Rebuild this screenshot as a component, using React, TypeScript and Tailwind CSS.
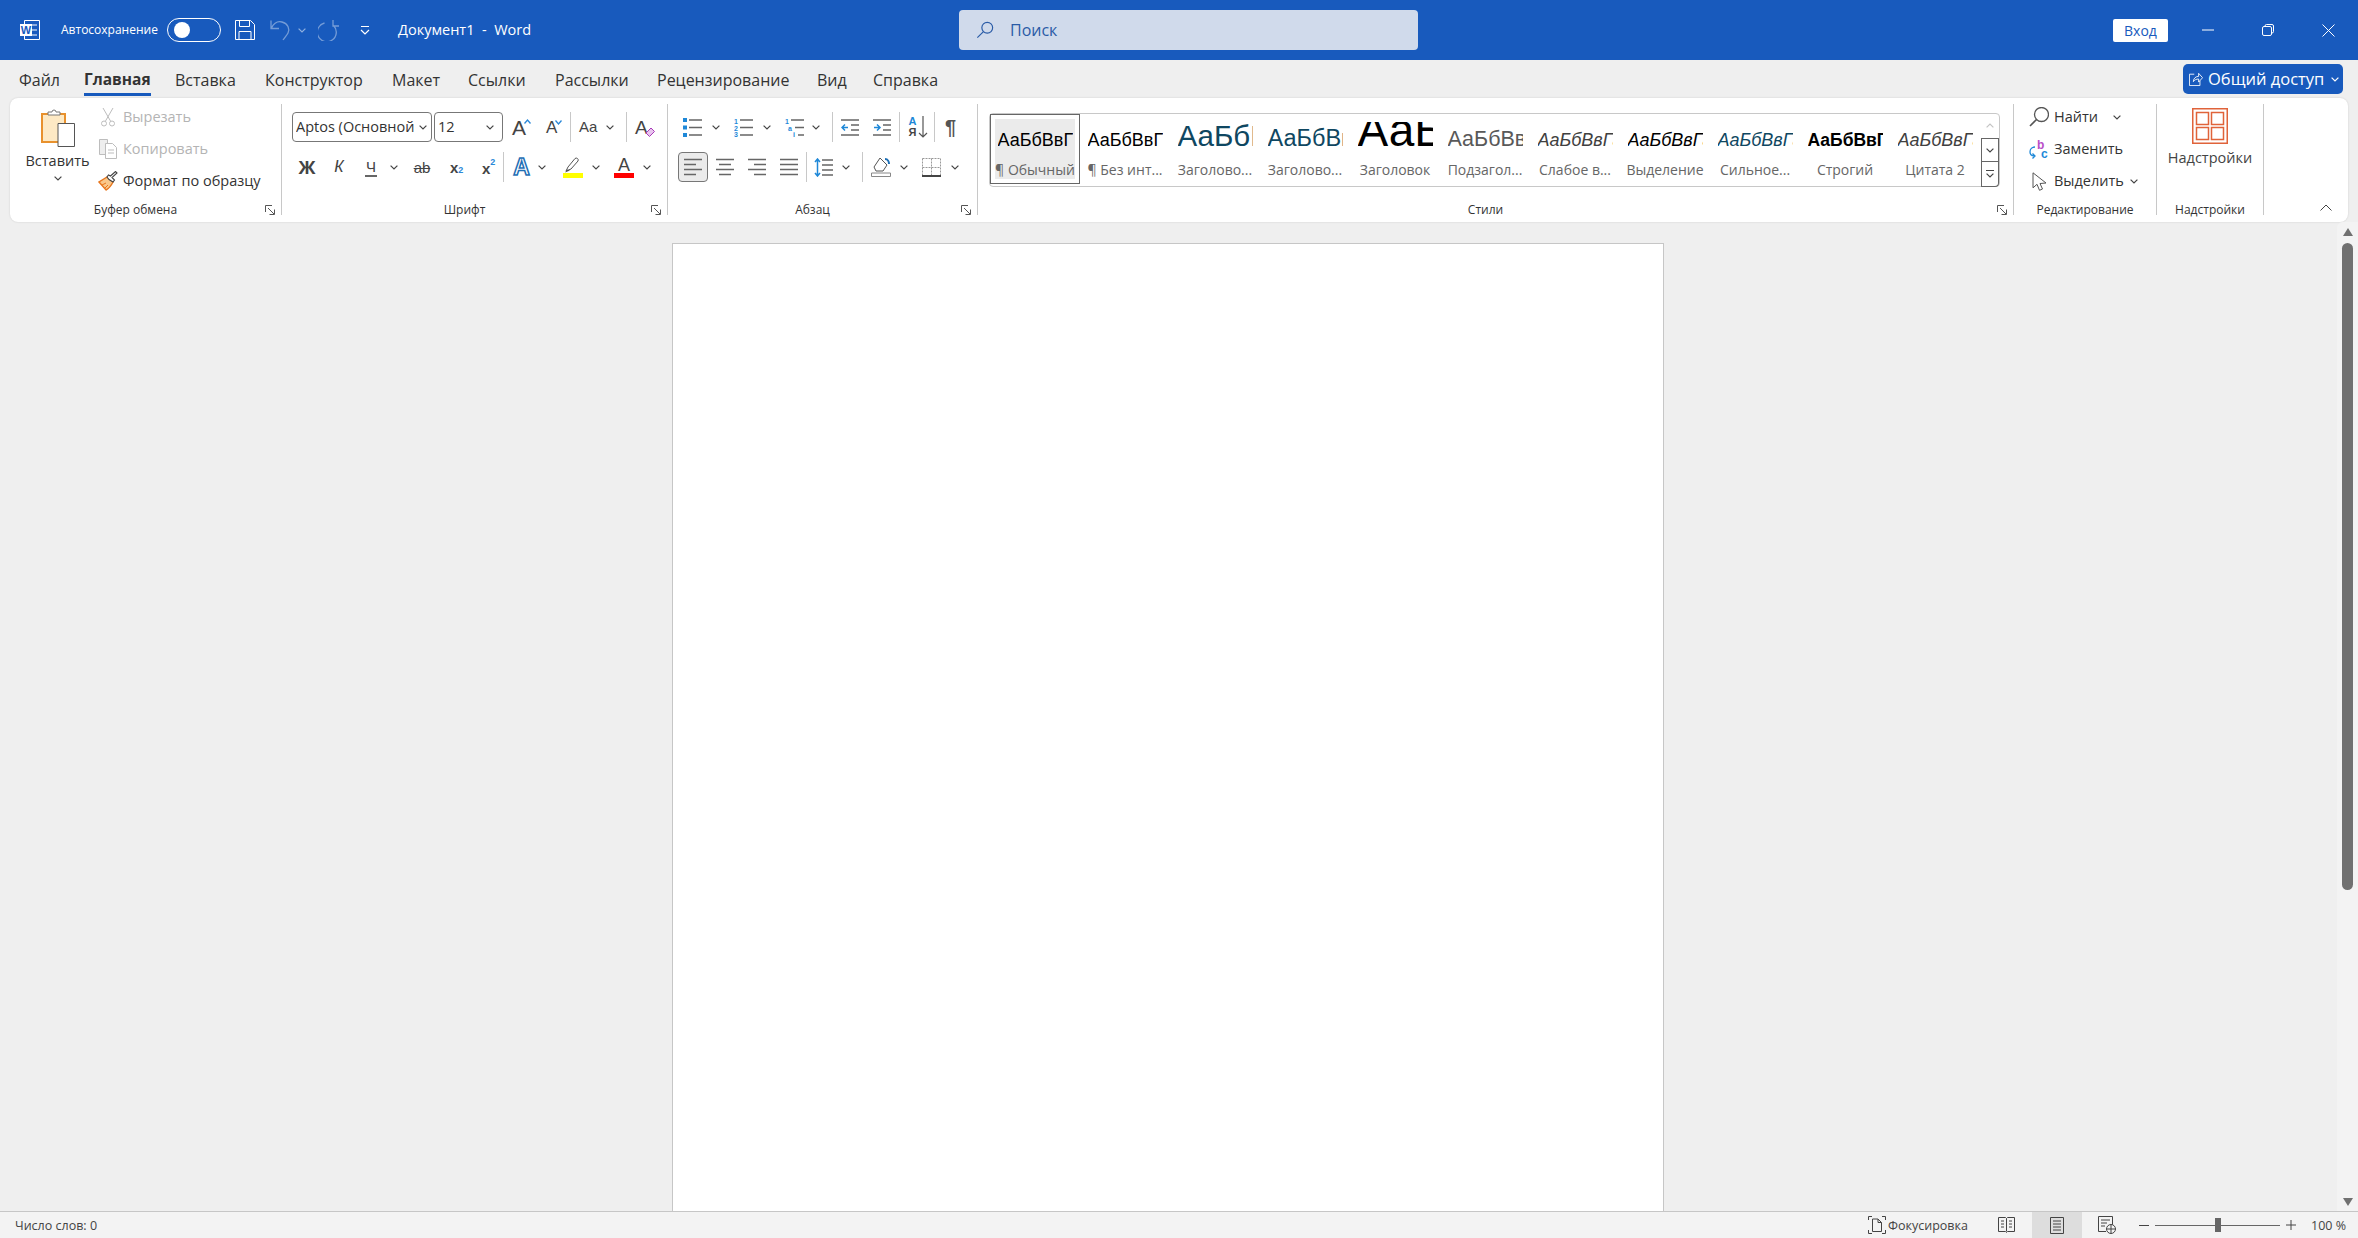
import React from "react";

const Chev = ({ className = "", color = "#444" }: { className?: string; color?: string }) => (
  <svg viewBox="0 0 8 5" className={`w-[8px] h-[5px] shrink-0 ${className}`}>
    <path d="M.6.6 4 4 7.4.6" fill="none" stroke={color} strokeWidth="1.2" />
  </svg>
);

const Sep = ({ className = "" }: { className?: string }) => (
  <div className={`w-px h-[30px] bg-[#c8c8c8] shrink-0 ${className}`} />
);

const Launcher = () => (
  <svg viewBox="0 0 10 10" className="w-[10px] h-[10px] shrink-0">
    <path d="M.5 7V.5H7M3 3l6 6M9.5 4.500v5h-5" fill="none" stroke="#555" strokeWidth="1" />
  </svg>
);

const Lines = ({ kind }: { kind: "left" | "center" | "right" | "justify" }) => {
  const rows = {
    left: ["M0 1.5h18", "M0 6.5h12", "M0 11.5h18", "M0 16.5h12"],
    center: ["M0 1.5h18", "M3 6.5h12", "M0 11.5h18", "M3 16.5h12"],
    right: ["M0 1.5h18", "M6 6.5h12", "M0 11.5h18", "M6 16.5h12"],
    justify: ["M0 1.5h18", "M0 6.5h18", "M0 11.5h18", "M0 16.5h18"],
  }[kind];
  return (
    <svg viewBox="0 0 18 18" className="w-[18px] h-[18px] shrink-0">
      <path d={rows.join("")} stroke="#666" strokeWidth="1.6" fill="none" />
    </svg>
  );
};

function WordIcon() {
  return (
    <svg viewBox="0 0 20 20" className="w-[20px] h-[20px] shrink-0">
      <path d="M4.5.5h15v19h-15z" fill="none" stroke="#fff" />
      <path d="M10 5h7M10 10h7M10 15h7" stroke="#fff" />
      <rect x="0" y="4" width="12" height="12" fill="#fff" />
      <text x="6" y="14" textAnchor="middle" fontSize="11" fontWeight="700" fill="#185abd" fontFamily="Liberation Sans">W</text>
    </svg>
  );
}

function TitleBar() {
  return (
    <div className="h-[60px] shrink-0 bg-[#185abd] flex items-center text-white">
      <div className="ml-[20px]"><WordIcon /></div>
      <span className="ml-[21px] w-[106px] text-[12px] whitespace-nowrap">Автосохранение</span>
      <div className="w-[54px] h-[24px] rounded-full border border-white flex items-center pl-[6px]">
        <div className="w-[16px] h-[16px] rounded-full bg-white" />
      </div>
      <svg viewBox="0 0 20 20" className="ml-[14px] w-[20px] h-[20px]">
        <path d="M.5.5h15l4 4v15H.5zM4.5.5v6h10v-6M4 19.5v-8h12v8" fill="none" stroke="#fff" />
      </svg>
      <svg viewBox="0 0 22 22" className="ml-[15px] w-[22px] h-[22px] opacity-40">
        <path d="M1 1.500v8h8M1.500 9C4 4 8 2 12 3c6 1.500 8 7 6 11-1 2-3 4-5 7" fill="none" stroke="#fff" strokeWidth="1.300" />
      </svg>
      <Chev className="ml-[6px]" color="#8fb0e0" />
      <svg viewBox="0 0 22 22" className="ml-[12px] w-[22px] h-[22px] opacity-40">
        <path d="M15 1v6h6M15.500 6.500a9.500 9.500 0 1 1-9-2.500" fill="none" stroke="#fff" strokeWidth="1.300" />
      </svg>
      <svg viewBox="0 0 10 10" className="ml-[20px] w-[10px] h-[10px]">
        <path d="M1 1.500h8M1 5l4 4 4-4" fill="none" stroke="#fff" strokeWidth="1.200" />
      </svg>
      <span className="ml-[28px] w-[561px] text-[14.500px] whitespace-pre">Документ1  -  Word</span>
      <div className="w-[459px] h-[40px] rounded-[4px] bg-[#d0daeb] flex items-center pl-[17px] text-[#2a5ba6]">
        <svg viewBox="0 0 20 20" className="w-[18px] h-[18px]">
          <circle cx="12.500" cy="7.500" r="6" fill="none" stroke="#2a5ba6" strokeWidth="1.300" />
          <path d="M8 12 1.500 18.500" stroke="#2a5ba6" strokeWidth="1.300" />
        </svg>
        <span className="ml-[16px] text-[16px]">Поиск</span>
      </div>
      <div className="ml-[695px] w-[55px] h-[23px] bg-white rounded-[2px] flex items-center justify-center text-[#185abd] text-[14px]">
        Вход
      </div>
      <svg viewBox="0 0 12 12" className="ml-[34px] w-[12px] h-[12px]"><path d="M0 6h12" stroke="#fff" /></svg>
      <svg viewBox="0 0 12 12" className="ml-[48px] w-[12px] h-[12px]">
        <path d="M3 2.500V2a1.500 1.500 0 0 1 1.500-1.500H10A1.500 1.500 0 0 1 11.500 2v5.500A1.500 1.500 0 0 1 10 9h-.5" fill="none" stroke="#fff" />
        <rect x=".5" y="2.500" width="9" height="9" rx="1.500" fill="none" stroke="#fff" />
      </svg>
      <svg viewBox="0 0 13 13" className="ml-[48px] w-[13px] h-[13px]"><path d="M.5.500l12 12M12.500.500l-12 12" stroke="#fff" /></svg>
    </div>
  );
}

const tabs = [
  { label: "Файл", w: "w-[65px] text-[16px]" },
  { label: "Главная", w: "w-[67px] mr-[24px] text-[15.500px] font-bold text-[#222] border-[#185abd]" },
  { label: "Вставка", w: "w-[90px] text-[16px]" },
  { label: "Конструктор", w: "w-[127px] text-[16px]" },
  { label: "Макет", w: "w-[76px] text-[16px]" },
  { label: "Ссылки", w: "w-[87px] text-[16px]" },
  { label: "Рассылки", w: "w-[102px] text-[16px]" },
  { label: "Рецензирование", w: "w-[160px] text-[16px]" },
  { label: "Вид", w: "w-[56px] text-[16px]" },
  { label: "Справка", w: "w-[80px] text-[16px]" },
];

function TabRow() {
  return (
    <div className="h-[38px] shrink-0 flex items-start pl-[19px]">
      {tabs.map((t) => (
        <span key={t.label} className={`h-[36px] pt-[7px] border-b-[3px] flex items-center text-[#333] whitespace-nowrap ${t.label === "Главная" ? "" : "border-transparent"} ${t.w}`}>
          {t.label}
        </span>
      ))}
      <div className="ml-auto mr-[15px] mt-[4px] w-[160px] h-[30px] rounded-[5px] bg-[#185abd] text-white flex items-center pl-[6px]">
        <svg viewBox="0 0 16 16" className="w-[14px] h-[14px] shrink-0">
          <path d="M6 2.500H.5v13h12V10M5 11C5 7 8 5 11 5V1.500l4.500 5-4.500 5V8c-2.500 0-5 1-6 3z" fill="none" stroke="#fff" />
        </svg>
        <span className="ml-[5px] w-[123px] text-[16.500px] whitespace-nowrap">Общий доступ</span>
        <Chev className="" color="#fff" />
      </div>
    </div>
  );
}

function Group({ width, label, launcher = true, children }: { width: string; label: string; launcher?: boolean; children: React.ReactNode }) {
  return (
    <div className={`mt-[6px] h-[111px] shrink-0 flex flex-col border-r border-[#c8c8c8] ${width}`}>
      <div className="h-[100px] shrink-0">{children}</div>
      <div className="flex items-center h-[11px]">
        <span className="flex-1 text-center text-[12px] leading-none text-[#333] whitespace-nowrap">{label}</span>
        {launcher && <div className="w-[20px] flex justify-start pl-[4px]"><Launcher /></div>}
      </div>
    </div>
  );
}

function SmallRow({ icon, text, dim, children }: { icon: React.ReactNode; text: string; dim?: boolean; children?: React.ReactNode }) {
  return (
    <div className="h-[24px] flex items-center">
      <div className="w-[20px] h-[20px] flex items-center justify-center shrink-0">{icon}</div>
      <span className={`ml-[5px] text-[14.500px] whitespace-nowrap ${dim ? "text-[#b4b4b4]" : "text-[#333]"}`}>{text}</span>
      {children}
    </div>
  );
}

function Clipboard() {
  return (
    <div className="mt-[4px] w-[85px] flex flex-col items-center">
      <svg viewBox="0 0 34 39" className="w-[34px] h-[39px]">
        <path d="M1 6h23v28H1z" fill="#fde9c4" stroke="#e8912d" strokeWidth="2" />
        <path d="M7 7V4h4a2 2 0 0 1 4 0h4v3z" fill="#fff" stroke="#777" />
        <path d="M17 15.500h16.500v23H17z" fill="#fff" stroke="#555" />
      </svg>
      <span className="mt-[5px] text-[14.500px] leading-[18px] text-[#333]">Вставить</span>
      <Chev className="mt-[6px]" />
    </div>
  );
}

function BufferGroup() {
  return (
    <Group width="w-[272px]" label="Буфер обмена">
      <div className="flex">
        <div className="ml-[5px]"><Clipboard /></div>
        <div className="pt-[1px] flex flex-col gap-[8px] -ml-[2px]">
          <SmallRow dim text="Вырезать" icon={
            <svg viewBox="0 0 14 20" className="w-[14px] h-[20px]">
              <path d="M2 1l7.500 13M12 1 4.500 14" stroke="#bdbdbd" fill="none" />
              <circle cx="3" cy="16.500" r="2.500" fill="none" stroke="#bdbdbd" />
              <circle cx="11" cy="16.500" r="2.500" fill="none" stroke="#bdbdbd" />
            </svg>
          } />
          <SmallRow dim text="Копировать" icon={
            <svg viewBox="0 0 18 20" className="w-[18px] h-[20px]">
              <path d="M.5.500h8v15h-8z" fill="#eee" stroke="#bdbdbd" />
              <path d="M6.500 4.500h7l4 4v11h-11zM9 11h6M9 14h6" fill="#fff" stroke="#bdbdbd" />
            </svg>
          } />
          <SmallRow text="Формат по образцу" icon={
            <svg viewBox="0 0 20 20" className="w-[20px] h-[20px]">
              <path d="M9 6 1 11l7 8c2-1 5-4 7-8z" fill="#f9c78a" stroke="#e8761d" strokeWidth="1.400" />
              <path d="M4 14l4-2M7 17l3-3" stroke="#e8761d" />
              <path d="M9 6 11 8.500 15 11 16.500 9 14 6.500 19 2 17.500.500 12.500 5 10.500 4z" fill="#fff" stroke="#444" strokeWidth="1.100" />
            </svg>
          } />
        </div>
      </div>
    </Group>
  );
}

function FontGroup() {
  return (
    <Group width="w-[386px]" label="Шрифт">
      <div className="pt-[8px] pl-[10px] flex items-center h-[38px]">
        <div className="w-[140px] h-[30px] border border-[#777] rounded-[4px] flex items-center pl-[3px] pr-[4px] text-[#333]">
          <span className="flex-1 text-[14.500px] whitespace-nowrap overflow-hidden">Aptos (Основной</span>
          <Chev />
        </div>
        <div className="ml-[2px] w-[69px] h-[30px] border border-[#777] rounded-[4px] flex items-center pl-[3px] pr-[8px] text-[#333]">
          <span className="flex-1 text-[14.500px]">12</span>
          <Chev />
        </div>
        <div className="ml-[9px] w-[21px] flex items-start">
          <span className="text-[21px] leading-none text-[#444] font-['Liberation_Sans',sans-serif]">A</span>
          <svg viewBox="0 0 7 5" className="w-[7px] h-[5px] -ml-[2px] mt-[2px]"><path d="M.5 4.500 3.500 1l3 3.500" fill="none" stroke="#2b88d8" strokeWidth="1.300" /></svg>
        </div>
        <div className="ml-[13px] w-[17px] flex items-start">
          <span className="text-[17px] leading-none text-[#444] font-['Liberation_Sans',sans-serif]">A</span>
          <svg viewBox="0 0 7 5" className="w-[7px] h-[5px] -ml-[2px] mt-[1px]"><path d="M.5.500l3 3.500 3-3.500" fill="none" stroke="#2b88d8" strokeWidth="1.300" /></svg>
        </div>
        <Sep className="ml-[7px]" />
        <span className="ml-[8px] w-[22px] text-[15px] text-[#444] whitespace-nowrap font-['Liberation_Sans',sans-serif]">Aa</span>
        <Chev className="ml-[5px]" />
        <Sep className="ml-[12px]" />
        <div className="ml-[8px] w-[20px] flex items-end">
          <span className="text-[19px] leading-none text-[#444] font-['Liberation_Sans',sans-serif]">A</span>
          <svg viewBox="0 0 10 10" className="w-[10px] h-[10px] -ml-[3px]"><path d="M1 6 6 1l3.500 3.500-5 5z" fill="#e8c5ee" stroke="#a83ab8" /></svg>
        </div>
      </div>
      <div className="mt-[10px] pl-[16px] flex items-center h-[30px] text-[#444]">
        <span className="w-[18px] text-center text-[18px] font-bold leading-none">Ж</span>
        <span className="ml-[17px] w-[12px] text-center text-[16px] italic leading-none font-['Liberation_Sans',sans-serif]">К</span>
        <span className="ml-[20px] w-[12px] text-center text-[15px] leading-[17px] border-b-2 border-[#666] font-['Liberation_Sans',sans-serif]">Ч</span>
        <Chev className="ml-[13px]" />
        <span className="ml-[14px] w-[20px] text-center text-[15px] leading-none line-through font-['Liberation_Sans',sans-serif]">ab</span>
        <span className="ml-[18px] w-[14px] flex items-end font-['Liberation_Sans',sans-serif]">
          <span className="text-[15px] font-bold leading-none">x</span>
          <span className="text-[9px] font-bold leading-none text-[#2b88d8]">2</span>
        </span>
        <span className="ml-[18px] w-[13px] flex items-start font-['Liberation_Sans',sans-serif]">
          <span className="text-[15px] font-bold leading-none mt-[3px]">x</span>
          <span className="text-[9px] font-bold leading-none text-[#2b88d8]">2</span>
        </span>
        <Sep className="ml-[8px]" />
        <span className="ml-[8px] w-[19px] text-center text-[23px] font-bold leading-none text-white [-webkit-text-stroke:1.500px_#1f6fb5] font-['Liberation_Sans',sans-serif]">A</span>
        <Chev className="ml-[7px]" />
        <div className="ml-[17px] w-[20px] flex flex-col items-center">
          <svg viewBox="0 0 20 16" className="w-[20px] h-[16px]">
            <path d="M3 14l2-4 7-8.500a2 2 0 0 1 3 2.500l-7 8z" fill="#fff" stroke="#555" />
            <path d="M2 15.500l2-3 3 1z" fill="#555" />
          </svg>
          <div className="w-[20px] h-[5px] bg-[#ffff00]" />
        </div>
        <Chev className="ml-[9px]" />
        <div className="ml-[14px] w-[20px] flex flex-col items-center">
          <span className="h-[16px] text-[18px] leading-[16px] font-['Liberation_Sans',sans-serif]">A</span>
          <div className="w-[20px] h-[5px] bg-[#ff0000]" />
        </div>
        <Chev className="ml-[9px]" />
      </div>
    </Group>
  );
}

function ListIcon({ marks }: { marks: "bullet" | "number" | "multi" }) {
  return (
    <svg viewBox="0 0 19 19" className="w-[19px] h-[19px] shrink-0">
      <path d={marks === "multi" ? "M6 2h13M10 9.500h9M13 17h6" : "M6 2h13M6 9.500h13M6 17h13"} stroke="#666" strokeWidth="1.300" />
      {marks === "bullet" && <path d="M0 0h4v4H0zM0 7.500h4v4H0zM0 15h4v4H0z" fill="#1e88d8" />}
      {marks !== "bullet" && (
        <g fill="#1e88d8" fontSize="7" fontWeight="700" fontFamily="Liberation Sans">
          <text x="0" y="6">1</text>
          <text x={marks === "multi" ? 3 : 0} y="12.500">{marks === "multi" ? "a" : "2"}</text>
          <text x={marks === "multi" ? 8 : 0} y="19">{marks === "multi" ? "i" : "3"}</text>
        </g>
      )}
    </svg>
  );
}

function ParagraphGroup() {
  return (
    <Group width="w-[310px]" label="Абзац">
      <div className="pt-[8px] pl-[15px] flex items-center h-[38px]">
        <ListIcon marks="bullet" />
        <Chev className="ml-[10px]" />
        <div className="ml-[14px]"><ListIcon marks="number" /></div>
        <Chev className="ml-[10px]" />
        <div className="ml-[14px]"><ListIcon marks="multi" /></div>
        <Chev className="ml-[8px]" />
        <Sep className="ml-[12px]" />
        <svg viewBox="0 0 18 18" className="ml-[8px] w-[18px] h-[18px]">
          <path d="M0 2h18M10 7h8M10 12h8M0 17h18" stroke="#666" strokeWidth="1.300" />
          <path d="M7 9.500H1M4 6.500l-3 3 3 3" fill="none" stroke="#1e88d8" strokeWidth="1.500" />
        </svg>
        <svg viewBox="0 0 18 18" className="ml-[14px] w-[18px] h-[18px]">
          <path d="M0 2h18M10 7h8M10 12h8M0 17h18" stroke="#666" strokeWidth="1.300" />
          <path d="M1 9.500h6M4 6.500l3 3-3 3" fill="none" stroke="#1e88d8" strokeWidth="1.500" />
        </svg>
        <Sep className="ml-[8px]" />
        <div className="ml-[7px] w-[21px] flex items-center font-['Liberation_Sans',sans-serif]">
          <div className="flex flex-col items-center w-[11px] text-[11px] font-bold leading-[11px]">
            <span className="text-[#1e88d8]">A</span>
            <span className="text-[#444]">Я</span>
          </div>
          <svg viewBox="0 0 10 22" className="w-[10px] h-[22px]">
            <path d="M5 0v21M1 17l4 4 4-4" fill="none" stroke="#555" strokeWidth="1.200" />
          </svg>
        </div>
        <Sep className="ml-[6px]" />
        <span className="ml-[10px] text-[20px] font-bold leading-none text-[#555] font-['Liberation_Sans',sans-serif]">¶</span>
      </div>
      <div className="mt-[10px] pl-[10px] flex items-center h-[30px]">
        <div className="w-[30px] h-[30px] rounded-[4px] border border-[#777] bg-[#ebebeb] flex items-center justify-center">
          <Lines kind="left" />
        </div>
        <div className="ml-[8px]"><Lines kind="center" /></div>
        <div className="ml-[14px]"><Lines kind="right" /></div>
        <div className="ml-[14px]"><Lines kind="justify" /></div>
        <Sep className="ml-[8px]" />
        <svg viewBox="0 0 19 19" className="ml-[7px] w-[19px] h-[19px]">
          <path d="M8 2h11M8 7h11M8 12h11M8 17h11" stroke="#666" strokeWidth="1.300" />
          <path d="M3.500 1v17M1 4l2.500-3L6 4M1 15l2.500 3L6 15" fill="none" stroke="#1e88d8" strokeWidth="1.500" />
        </svg>
        <Chev className="ml-[9px]" />
        <Sep className="ml-[12px]" />
        <svg viewBox="0 0 20 20" className="ml-[8px] w-[20px] h-[20px]">
          <path d="M3 10 9 1l7 7-4 6H5z" fill="#fff" stroke="#555" />
          <path d="M14 2c3 0 4 3 4 5" fill="none" stroke="#1e6fb5" strokeWidth="2" />
          <path d="M.500 16h19v3.500H.500z" fill="#fff" stroke="#888" />
        </svg>
        <Chev className="ml-[9px]" />
        <svg viewBox="0 0 19 19" className="ml-[14px] w-[19px] h-[19px]">
          <path d="M.5.500h18M.5.500v18M18.500.500v18M9.500.500v18M.5 9.500h18" fill="none" stroke="#999" strokeDasharray="2 1" />
          <path d="M0 18h19" stroke="#444" strokeWidth="2" />
        </svg>
        <Chev className="ml-[10px]" />
      </div>
    </Group>
  );
}

const styles = [
  { sample: "АаБбВвГгДд", label: "¶ Обычный", cls: "text-[18px] text-black" },
  { sample: "АаБбВвГгДд", label: "¶ Без инт...", cls: "text-[18px] text-black" },
  { sample: "АаБбВвГгДд", label: "Заголово...", cls: "text-[29.500px] text-[#0f4761]" },
  { sample: "АаБбВвГгДд", label: "Заголово...", cls: "text-[23.500px] text-[#0f4761]" },
  { sample: "АаБбВвГгДд", label: "Заголовок", cls: "text-[46px] text-black" },
  { sample: "АаБбВвГгДд", label: "Подзагол...", cls: "text-[21.500px] text-[#595959]" },
  { sample: "АаБбВвГгДд", label: "Слабое в...", cls: "text-[18px] italic text-[#404040]" },
  { sample: "АаБбВвГгДд", label: "Выделение", cls: "text-[18px] italic text-black" },
  { sample: "АаБбВвГгДд", label: "Сильное...", cls: "text-[18px] italic text-[#0f4761]" },
  { sample: "АаБбВвГгДд", label: "Строгий", cls: "text-[17.500px] font-bold text-black" },
  { sample: "АаБбВвГгДд", label: "Цитата 2", cls: "text-[18px] italic text-[#404040]" },
];

function StylesGroup() {
  return (
    <Group width="w-[1036px]" label="Стили">
      <div className="pl-[11px] pt-[9px]">
        <div className="w-[1011px] h-[74px] flex border border-[#c8c8c8] rounded-[4px] bg-white">
          {styles.map((s, i) => (
            <div key={i} className={`w-[90px] h-[70px] shrink-0 p-[4px] box-border ${i === 0 ? "border border-[#666]" : "border border-transparent"}`}>
              <div className={`h-full flex flex-col items-center ${i === 0 ? "bg-[#ebebeb]" : ""}`}>
                <div className="mt-[3px] w-[75px] h-[30px] shrink-0 overflow-hidden whitespace-nowrap text-[18px] leading-[36px] font-['Liberation_Sans',sans-serif]">
                  <span className={`leading-[0] ${s.cls}`}>{s.sample}</span>
                </div>
                <span className="mt-[9px] text-[14px] leading-[18px] text-[#666] whitespace-nowrap">{s.label}</span>
              </div>
            </div>
          ))}
          <div className="w-[18px] -my-px -mr-px ml-[1px] flex flex-col shrink-0">
            <div className="h-[25px] flex items-center justify-center">
              <svg viewBox="0 0 8 5" className="w-[8px] h-[5px]"><path d="M.6 4.400 4 1l3.400 3.400" fill="none" stroke="#c4c4c4" strokeWidth="1.200" /></svg>
            </div>
            <div className="h-[24px] border border-[#666] flex items-center justify-center"><Chev /></div>
            <div className="h-[25px] border border-t-0 border-[#666] rounded-br-[4px] flex flex-col items-center justify-center gap-[2px]">
              <div className="w-[8px] h-px bg-[#444]" />
              <Chev />
            </div>
          </div>
        </div>
      </div>
    </Group>
  );
}

function EditGroup() {
  return (
    <Group width="w-[143px]" label="Редактирование" launcher={false}>
      <div className="pl-[15px] pt-[1px] flex flex-col gap-[8px]">
        <SmallRow text="Найти" icon={
          <svg viewBox="0 0 20 20" className="w-[20px] h-[20px]">
            <circle cx="12.500" cy="7.500" r="7" fill="none" stroke="#555" strokeWidth="1.300" />
            <path d="M7.500 12.500 1 19" stroke="#555" strokeWidth="1.600" />
          </svg>
        }>
          <Chev className="ml-[15px]" />
        </SmallRow>
        <SmallRow text="Заменить" icon={
          <svg viewBox="0 0 20 20" className="w-[20px] h-[20px]">
            <path d="M6 8C3 8 1 10 1 13s2 4 5 4M3.500 14.500 6 17l-2.500 2.500" fill="none" stroke="#1e88d8" strokeWidth="1.300" />
            <text x="8" y="10" fontSize="12" fontWeight="700" fill="#b94ec9" fontFamily="Liberation Sans">b</text>
            <text x="12" y="19" fontSize="12" fontWeight="700" fill="#1e88d8" fontFamily="Liberation Sans">c</text>
          </svg>
        } />
        <SmallRow text="Выделить" icon={
          <svg viewBox="0 0 15 19" className="w-[15px] h-[19px]">
            <path d="M1 .8v15l4-3.500 2.500 6 3-1.300L8 11.500l6-.5z" fill="#fff" stroke="#555" />
          </svg>
        }>
          <Chev className="ml-[6px]" />
        </SmallRow>
      </div>
    </Group>
  );
}

function AddinsGroup() {
  return (
    <Group width="w-[107px]" label="Надстройки" launcher={false}>
      <div className="pt-[4px] flex flex-col items-center">
        <svg viewBox="0 0 36 36" className="w-[36px] h-[36px]">
          <path d="M.75.750h34.500v34.500H.75z" fill="none" stroke="#e0633a" strokeWidth="1.500" />
          <path d="M4.500 4.500h12v12h-12zM19.500 4.500h12v12h-12zM4.500 19.500h12v12h-12zM19.500 19.500h12v12h-12z" fill="none" stroke="#e0633a" strokeWidth="1.500" />
        </svg>
        <span className="mt-[5px] text-[14.500px] leading-[18px] text-[#444] whitespace-nowrap">Надстройки</span>
      </div>
    </Group>
  );
}

function Ribbon() {
  return (
    <div className="ml-[10px] w-[2338px] h-[124px] shrink-0 bg-white rounded-[8px] shadow-[0_0_2px_rgba(0,0,0,0.15)] flex">
      <BufferGroup />
      <FontGroup />
      <ParagraphGroup />
      <StylesGroup />
      <EditGroup />
      <AddinsGroup />
      <div className="flex-1 mt-[6px] h-[111px] flex items-end justify-end pr-[16px] pb-[4px]">
        <svg viewBox="0 0 12 7" className="w-[12px] h-[7px]"><path d="M.5 6.500 6 1l5.500 5.500" fill="none" stroke="#444" /></svg>
      </div>
    </div>
  );
}

function Scrollbar() {
  return (
    <div className="w-[21px] shrink-0 bg-[#f3f3f3] rounded-tl-[6px] flex flex-col items-center pt-[6px] pb-[5px]">
      <div className="w-0 h-0 border-x-[5.500px] border-x-transparent border-b-[8px] border-b-[#707070]" />
      <div className="mt-[7px] w-[11px] h-[647px] rounded-full bg-[#707070]" />
      <div className="mt-auto w-0 h-0 border-x-[5.500px] border-x-transparent border-t-[8px] border-t-[#707070]" />
    </div>
  );
}

function StatusBar() {
  return (
    <div className="h-[27px] shrink-0 box-border border-t border-[#c6c6c6] bg-[#f3f3f3] flex items-center text-[12.500px] text-[#444]">
      <span className="ml-[15px] pt-[2px]">Число слов: 0</span>
      <svg viewBox="0 0 18 18" className="ml-auto w-[18px] h-[18px]">
        <path d="M.5 4V.5H4M14 .5h3.500V4M.5 14v3.500H4M14 17.500h3.500V14" fill="none" stroke="#444" />
        <path d="M4.500 3h5.500l3.500 3.500v9h-9zM10 3v3.500h3.500" fill="none" stroke="#444" />
      </svg>
      <span className="ml-[2px] w-[110px] pt-[2px]">Фокусировка</span>
      <svg viewBox="0 0 17 16" className="w-[17px] h-[16px]">
        <path d="M.5.500h7l1 1 1-1h7v14h-7l-1 1-1-1h-7zM8.500 1.500v13M3 4h3M3 7h3M3 10h3M11 4h3M11 7h3M11 10h3" fill="none" stroke="#444" />
      </svg>
      <div className="ml-[17px] w-[50px] h-full bg-[#dddddd] flex items-center justify-center">
        <svg viewBox="0 0 14 17" className="w-[14px] h-[17px]">
          <path d="M.5.500h13v16H.5zM3 4h8M3 7h8M3 10h8M3 13h8" fill="none" stroke="#444" />
        </svg>
      </div>
      <svg viewBox="0 0 18 18" className="ml-[16px] w-[18px] h-[18px]">
        <path d="M.5.500h14V9M.5.500v15H8M3 4h9M3 7h6M3 10h4" fill="none" stroke="#444" />
        <circle cx="13" cy="13" r="4.500" fill="#f3f3f3" stroke="#444" />
        <path d="M8.500 13h9M13 8.500v9" stroke="#444" />
      </svg>
      <div className="ml-[23px] w-[10px] h-px bg-[#444]" />
      <div className="ml-[6px] w-[125px] h-px bg-[#666] flex items-center pl-[60px]">
        <div className="w-[6px] h-[14px] bg-[#666] shrink-0" />
      </div>
      <svg viewBox="0 0 10 10" className="ml-[6px] w-[10px] h-[10px]"><path d="M0 5h10M5 0v10" stroke="#444" /></svg>
      <span className="ml-[15px] w-[47px] pt-[2px] whitespace-nowrap">100 %</span>
    </div>
  );
}

export default function App() {
  return (
    <div className="w-[2358px] h-[1238px] overflow-hidden flex flex-col bg-[#efefef] font-['Open_Sans','Noto_Sans',sans-serif]">
      <TitleBar />
      <TabRow />
      <Ribbon />
      <div className="flex-1 min-h-0 flex">
        <div className="flex-1 min-w-0 overflow-hidden pt-[21px] pr-[1px]">
          <div className="mx-auto w-[992px] h-full bg-white border border-b-0 border-[#c6c6c6]" />
        </div>
        <Scrollbar />
      </div>
      <StatusBar />
    </div>
  );
}
